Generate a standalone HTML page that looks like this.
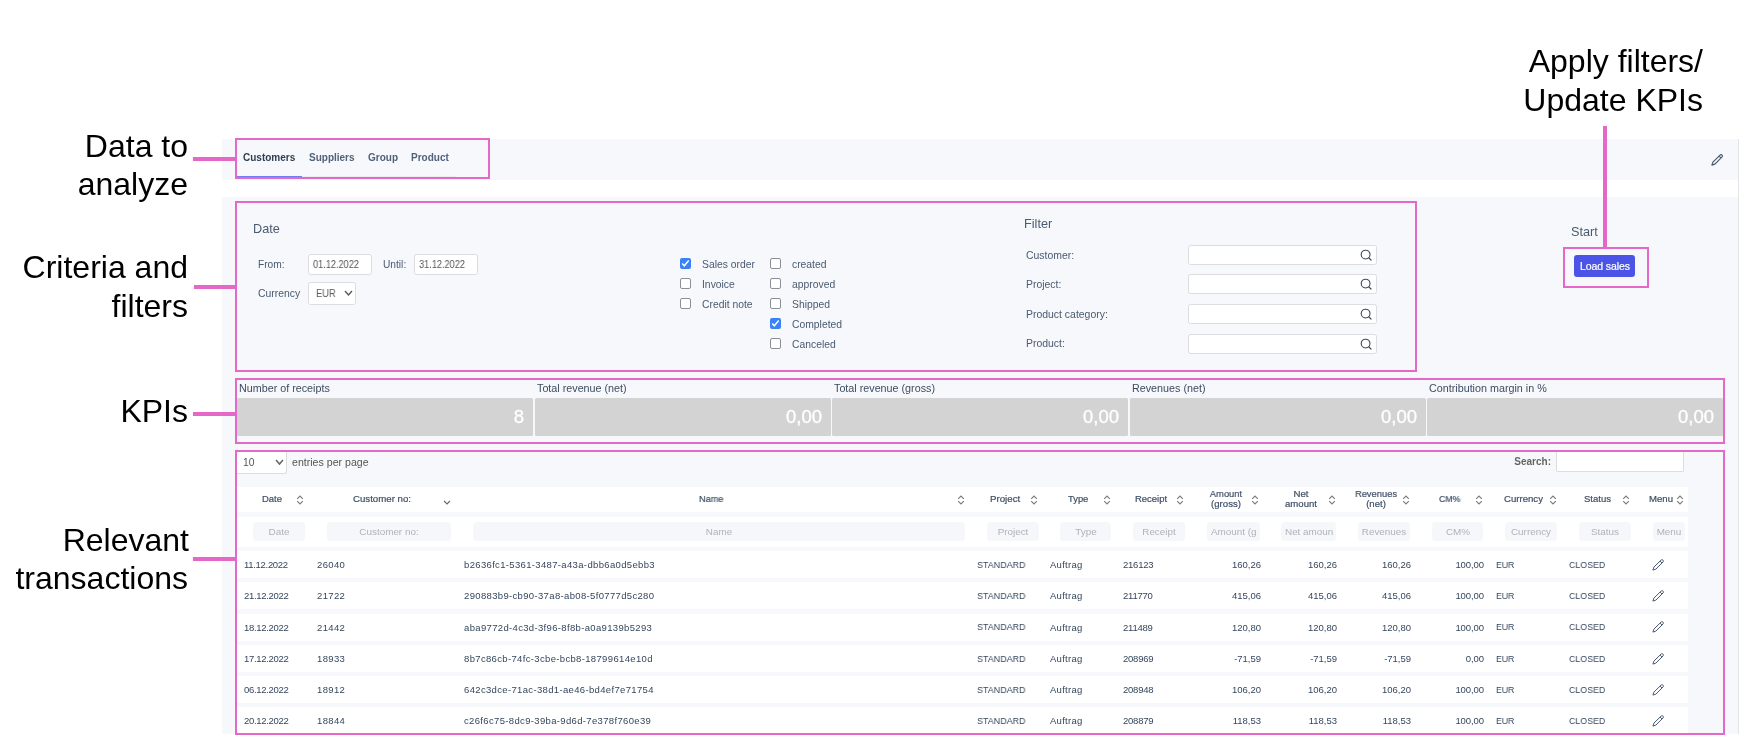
<!DOCTYPE html>
<html><head><meta charset="utf-8"><style>
html,body{margin:0;padding:0;background:#fff;}
body{width:1750px;height:752px;position:relative;overflow:hidden;font-family:"Liberation Sans",sans-serif;}
.t{position:absolute;white-space:nowrap;will-change:transform;}
.r{position:absolute;}
svg.r{overflow:visible;}
</style></head><body>
<div class="r" style="left:222px;top:139px;width:1516px;height:41px;background:#f7f8fb;"></div>
<div class="r" style="left:222px;top:197px;width:1516px;height:537px;background:#f7f8fb;"></div>
<div class="r" style="left:1738px;top:139px;width:1px;height:595px;background:#e3e4e6;"></div>
<div class="t" style="left:-412.00px;width:600px;text-align:right;top:129.91px;font-size:32px;line-height:32px;color:#000;font-weight:400;">Data to</div>
<div class="t" style="left:-412.00px;width:600px;text-align:right;top:167.91px;font-size:32px;line-height:32px;color:#000;font-weight:400;">analyze</div>
<div class="t" style="left:-412.50px;width:600px;text-align:right;top:250.71px;font-size:32px;line-height:32px;color:#000;font-weight:400;">Criteria and</div>
<div class="t" style="left:-412.20px;width:600px;text-align:right;top:289.61px;font-size:32px;line-height:32px;color:#000;font-weight:400;">filters</div>
<div class="t" style="left:-412.00px;width:600px;text-align:right;top:394.91px;font-size:32px;line-height:32px;color:#000;font-weight:400;">KPIs</div>
<div class="t" style="left:-411.40px;width:600px;text-align:right;top:523.91px;font-size:32px;line-height:32px;color:#000;font-weight:400;">Relevant</div>
<div class="t" style="left:-412.20px;width:600px;text-align:right;top:561.91px;font-size:32px;line-height:32px;color:#000;font-weight:400;">transactions</div>
<div class="t" style="left:1103.30px;width:600px;text-align:right;top:45.11px;font-size:32px;line-height:32px;color:#000;font-weight:400;">Apply filters/</div>
<div class="t" style="left:1102.60px;width:600px;text-align:right;top:83.81px;font-size:32px;line-height:32px;color:#000;font-weight:400;">Update KPIs</div>
<div class="r" style="left:193px;top:157px;width:43px;height:4px;background:#e567c8;"></div>
<div class="r" style="left:194px;top:285px;width:42px;height:4px;background:#e567c8;"></div>
<div class="r" style="left:193px;top:412px;width:43px;height:4px;background:#e567c8;"></div>
<div class="r" style="left:193px;top:557px;width:43px;height:4px;background:#e567c8;"></div>
<div class="r" style="left:1603px;top:126px;width:4px;height:122px;background:#e567c8;"></div>
<div class="t" style="left:243.00px;top:152.94px;font-size:10px;line-height:10px;color:#2f3e52;font-weight:700;">Customers</div>
<div class="t" style="left:309.20px;top:152.94px;font-size:10px;line-height:10px;color:#51627a;font-weight:700;">Suppliers</div>
<div class="t" style="left:368.20px;top:152.94px;font-size:10px;line-height:10px;color:#51627a;font-weight:700;">Group</div>
<div class="t" style="left:410.60px;top:152.94px;font-size:10px;line-height:10px;color:#51627a;font-weight:700;">Product</div>
<div class="r" style="left:302px;top:176px;width:154px;height:1px;background:#eceef3;"></div>
<div class="r" style="left:237px;top:176px;width:65px;height:1.5px;background:#6d7ef0;"></div>
<svg class="r" style="left:1711px;top:154.2px" width="12" height="12" viewBox="0 0 12 12"><path d="M9.3 0.9 Q10.3 0.4 11.1 1.2 Q11.7 2 11.1 2.9 L3.9 10.1 L0.9 11.1 L1.9 8.1 Z M8.1 2.1 L10 4" fill="none" stroke="#4a5a70" stroke-width="1.2" stroke-linejoin="round"/></svg>
<div class="t" style="left:252.50px;top:222.75px;font-size:12.7px;line-height:12.7px;color:#4a5a70;font-weight:400;">Date</div>
<div class="t" style="left:258.00px;top:259.67px;font-size:10.2px;line-height:10.2px;color:#4a5a70;font-weight:400;">From:</div>
<div class="r" style="left:308px;top:254px;width:63.5px;height:20.5px;background:#fff;border:1px solid #dcdde0;border-radius:2.5px;box-sizing:border-box;"></div>
<div class="t" style="left:312.80px;top:259.74px;font-size:10px;line-height:10px;color:#555;font-weight:400;transform:scaleX(0.9180);transform-origin:0.00px 0;">01.12.2022</div>
<div class="t" style="left:383.00px;top:259.67px;font-size:10.2px;line-height:10.2px;color:#4a5a70;font-weight:400;">Until:</div>
<div class="r" style="left:414px;top:254px;width:63.5px;height:20.5px;background:#fff;border:1px solid #dcdde0;border-radius:2.5px;box-sizing:border-box;"></div>
<div class="t" style="left:419.00px;top:259.74px;font-size:10px;line-height:10px;color:#555;font-weight:400;transform:scaleX(0.9180);transform-origin:0.00px 0;">31.12.2022</div>
<div class="t" style="left:258.00px;top:289.00px;font-size:10.4px;line-height:10.4px;color:#4a5a70;font-weight:400;">Currency</div>
<div class="r" style="left:308px;top:281.5px;width:48px;height:23.3px;background:#fff;border:1px solid #dcdde0;border-radius:2.5px;box-sizing:border-box;"></div>
<div class="t" style="left:316.30px;top:289.08px;font-size:10.3px;line-height:10.3px;color:#5a5a5a;font-weight:400;transform:scaleX(0.9111);transform-origin:0.00px 0;">EUR</div>
<svg class="r" style="left:344.2px;top:290.0px" width="9" height="6" viewBox="-1 -1 9 6"><path d="M0 0 L3.5 4 L7 0" fill="none" stroke="#555" stroke-width="1.3"/></svg>
<svg class="r" style="left:680px;top:258px" width="11" height="11" viewBox="0 0 11 11"><rect x="0" y="0" width="11" height="11" rx="2" fill="#3b82f6"/><path d="M2.2 5.6 L4.3 7.8 L8.7 2.6" fill="none" stroke="#fff" stroke-width="1.5"/></svg>
<div class="t" style="left:702.00px;top:259.84px;font-size:10.35px;line-height:10.35px;color:#4a5a70;font-weight:400;">Sales order</div>
<div class="r" style="left:680px;top:278px;width:11px;height:11px;background:#fff;border:1px solid #8a8f98;border-radius:2px;box-sizing:border-box;"></div>
<div class="t" style="left:702.00px;top:279.84px;font-size:10.35px;line-height:10.35px;color:#4a5a70;font-weight:400;">Invoice</div>
<div class="r" style="left:680px;top:298px;width:11px;height:11px;background:#fff;border:1px solid #8a8f98;border-radius:2px;box-sizing:border-box;"></div>
<div class="t" style="left:702.00px;top:299.84px;font-size:10.35px;line-height:10.35px;color:#4a5a70;font-weight:400;">Credit note</div>
<div class="r" style="left:770px;top:258px;width:11px;height:11px;background:#fff;border:1px solid #8a8f98;border-radius:2px;box-sizing:border-box;"></div>
<div class="t" style="left:791.60px;top:259.84px;font-size:10.35px;line-height:10.35px;color:#4a5a70;font-weight:400;">created</div>
<div class="r" style="left:770px;top:278px;width:11px;height:11px;background:#fff;border:1px solid #8a8f98;border-radius:2px;box-sizing:border-box;"></div>
<div class="t" style="left:791.60px;top:279.84px;font-size:10.35px;line-height:10.35px;color:#4a5a70;font-weight:400;">approved</div>
<div class="r" style="left:770px;top:298px;width:11px;height:11px;background:#fff;border:1px solid #8a8f98;border-radius:2px;box-sizing:border-box;"></div>
<div class="t" style="left:791.60px;top:299.84px;font-size:10.35px;line-height:10.35px;color:#4a5a70;font-weight:400;">Shipped</div>
<svg class="r" style="left:770px;top:318px" width="11" height="11" viewBox="0 0 11 11"><rect x="0" y="0" width="11" height="11" rx="2" fill="#3b82f6"/><path d="M2.2 5.6 L4.3 7.8 L8.7 2.6" fill="none" stroke="#fff" stroke-width="1.5"/></svg>
<div class="t" style="left:791.60px;top:319.84px;font-size:10.35px;line-height:10.35px;color:#4a5a70;font-weight:400;">Completed</div>
<div class="r" style="left:770px;top:338px;width:11px;height:11px;background:#fff;border:1px solid #8a8f98;border-radius:2px;box-sizing:border-box;"></div>
<div class="t" style="left:791.60px;top:339.84px;font-size:10.35px;line-height:10.35px;color:#4a5a70;font-weight:400;">Canceled</div>
<div class="t" style="left:1024.00px;top:217.95px;font-size:12.7px;line-height:12.7px;color:#4a5a70;font-weight:400;">Filter</div>
<div class="t" style="left:1026.00px;top:250.65px;font-size:10.45px;line-height:10.45px;color:#4a5a70;font-weight:400;">Customer:</div>
<div class="r" style="left:1188px;top:245px;width:188.5px;height:20.3px;background:#fff;border:1px solid #dcdde0;border-radius:2.5px;box-sizing:border-box;"></div>
<svg class="r" style="left:1359.5px;top:249px" width="12" height="12" viewBox="0 0 12 12"><circle cx="5.6" cy="5.6" r="4.4" fill="none" stroke="#3d4857" stroke-width="1.1"/><path d="M8.8 8.8 L11 11" stroke="#3d4857" stroke-width="1.2" stroke-linecap="round"/></svg>
<div class="t" style="left:1026.00px;top:280.45px;font-size:10.45px;line-height:10.45px;color:#4a5a70;font-weight:400;">Project:</div>
<div class="r" style="left:1188px;top:274.2px;width:188.5px;height:20.3px;background:#fff;border:1px solid #dcdde0;border-radius:2.5px;box-sizing:border-box;"></div>
<svg class="r" style="left:1359.5px;top:278.2px" width="12" height="12" viewBox="0 0 12 12"><circle cx="5.6" cy="5.6" r="4.4" fill="none" stroke="#3d4857" stroke-width="1.1"/><path d="M8.8 8.8 L11 11" stroke="#3d4857" stroke-width="1.2" stroke-linecap="round"/></svg>
<div class="t" style="left:1026.00px;top:309.65px;font-size:10.45px;line-height:10.45px;color:#4a5a70;font-weight:400;">Product category:</div>
<div class="r" style="left:1188px;top:304px;width:188.5px;height:20.3px;background:#fff;border:1px solid #dcdde0;border-radius:2.5px;box-sizing:border-box;"></div>
<svg class="r" style="left:1359.5px;top:308px" width="12" height="12" viewBox="0 0 12 12"><circle cx="5.6" cy="5.6" r="4.4" fill="none" stroke="#3d4857" stroke-width="1.1"/><path d="M8.8 8.8 L11 11" stroke="#3d4857" stroke-width="1.2" stroke-linecap="round"/></svg>
<div class="t" style="left:1026.00px;top:339.45px;font-size:10.45px;line-height:10.45px;color:#4a5a70;font-weight:400;">Product:</div>
<div class="r" style="left:1188px;top:333.8px;width:188.5px;height:20.3px;background:#fff;border:1px solid #dcdde0;border-radius:2.5px;box-sizing:border-box;"></div>
<svg class="r" style="left:1359.5px;top:337.8px" width="12" height="12" viewBox="0 0 12 12"><circle cx="5.6" cy="5.6" r="4.4" fill="none" stroke="#3d4857" stroke-width="1.1"/><path d="M8.8 8.8 L11 11" stroke="#3d4857" stroke-width="1.2" stroke-linecap="round"/></svg>
<div class="t" style="left:1571.00px;top:225.55px;font-size:12.7px;line-height:12.7px;color:#4a5a70;font-weight:400;">Start</div>
<div class="r" style="left:1574px;top:255px;width:61px;height:22px;background:#4b54e7;border-radius:3px;"></div>
<div class="t" style="left:1304.75px;width:600px;text-align:center;top:261.11px;font-size:10.5px;line-height:10.5px;color:#fff;font-weight:400;letter-spacing:-0.091px;-webkit-text-stroke:0.2px currentColor;">Load sales</div>
<div class="t" style="left:239.40px;top:382.90px;font-size:10.75px;line-height:10.75px;color:#3d4c60;font-weight:400;">Number of receipts</div>
<div class="r" style="left:237.0px;top:398.3px;width:296px;height:37.3px;background:#d3d3d3;border-radius:1.5px;"></div>
<div class="t" style="left:-76.00px;width:600px;text-align:right;top:407.64px;font-size:18.5px;line-height:18.5px;color:#fff;font-weight:400;-webkit-text-stroke:0.3px #fff;">8</div>
<div class="t" style="left:536.90px;top:382.90px;font-size:10.75px;line-height:10.75px;color:#3d4c60;font-weight:400;">Total revenue (net)</div>
<div class="r" style="left:534.5px;top:398.3px;width:296px;height:37.3px;background:#d3d3d3;border-radius:1.5px;"></div>
<div class="t" style="left:221.50px;width:600px;text-align:right;top:407.64px;font-size:18.5px;line-height:18.5px;color:#fff;font-weight:400;-webkit-text-stroke:0.3px #fff;">0,00</div>
<div class="t" style="left:834.40px;top:382.90px;font-size:10.75px;line-height:10.75px;color:#3d4c60;font-weight:400;">Total revenue (gross)</div>
<div class="r" style="left:832.0px;top:398.3px;width:296px;height:37.3px;background:#d3d3d3;border-radius:1.5px;"></div>
<div class="t" style="left:519.00px;width:600px;text-align:right;top:407.64px;font-size:18.5px;line-height:18.5px;color:#fff;font-weight:400;-webkit-text-stroke:0.3px #fff;">0,00</div>
<div class="t" style="left:1131.90px;top:382.90px;font-size:10.75px;line-height:10.75px;color:#3d4c60;font-weight:400;">Revenues (net)</div>
<div class="r" style="left:1129.5px;top:398.3px;width:296px;height:37.3px;background:#d3d3d3;border-radius:1.5px;"></div>
<div class="t" style="left:816.50px;width:600px;text-align:right;top:407.64px;font-size:18.5px;line-height:18.5px;color:#fff;font-weight:400;-webkit-text-stroke:0.3px #fff;">0,00</div>
<div class="t" style="left:1429.40px;top:382.90px;font-size:10.75px;line-height:10.75px;color:#3d4c60;font-weight:400;">Contribution margin in %</div>
<div class="r" style="left:1427.0px;top:398.3px;width:296px;height:37.3px;background:#d3d3d3;border-radius:1.5px;"></div>
<div class="t" style="left:1114.00px;width:600px;text-align:right;top:407.64px;font-size:18.5px;line-height:18.5px;color:#fff;font-weight:400;-webkit-text-stroke:0.3px #fff;">0,00</div>
<div class="r" style="left:235px;top:138px;width:255px;height:41px;border:2px solid #e567c8;box-sizing:border-box;"></div>
<div class="r" style="left:235px;top:201px;width:1182px;height:171px;border:2px solid #e567c8;box-sizing:border-box;"></div>
<div class="r" style="left:1563px;top:247px;width:86px;height:41px;border:2px solid #e567c8;box-sizing:border-box;"></div>
<div class="r" style="left:235px;top:378px;width:1490px;height:66px;border:2px solid #e567c8;box-sizing:border-box;"></div>
<div class="r" style="left:237px;top:452px;width:50px;height:21.5px;background:#fff;border:1px solid #dcdde0;border-top:none;border-left:none;border-radius:0 0 3px 0;box-sizing:border-box;"></div>
<div class="t" style="left:243.20px;top:457.58px;font-size:10.3px;line-height:10.3px;color:#555;font-weight:400;">10</div>
<svg class="r" style="left:275.0px;top:459.3px" width="9" height="6" viewBox="-1 -1 9 6"><path d="M0 0 L3.5 4 L7 0" fill="none" stroke="#666" stroke-width="1.5"/></svg>
<div class="t" style="left:291.60px;top:457.33px;font-size:10.6px;line-height:10.6px;color:#555;font-weight:400;">entries per page</div>
<div class="t" style="left:950.60px;width:600px;text-align:right;top:456.54px;font-size:10px;line-height:10px;color:#646464;font-weight:700;">Search:</div>
<div class="r" style="left:1556px;top:452px;width:128px;height:20px;background:#fff;border:1px solid #dcdde0;border-top:none;border-radius:0 0 2px 2px;box-sizing:border-box;"></div>
<div class="r" style="left:237px;top:486.6px;width:1451px;height:25px;background:#fff;"></div>
<div class="r" style="left:237px;top:516.5px;width:1451px;height:30.2px;background:#fff;"></div>
<div class="r" style="left:237px;top:551px;width:1451px;height:27.2px;background:#fff;"></div>
<div class="r" style="left:237px;top:582.2px;width:1451px;height:27.2px;background:#fff;"></div>
<div class="r" style="left:237px;top:613.5px;width:1451px;height:27.2px;background:#fff;"></div>
<div class="r" style="left:237px;top:644.8px;width:1451px;height:27.2px;background:#fff;"></div>
<div class="r" style="left:237px;top:676.1px;width:1451px;height:27.2px;background:#fff;"></div>
<div class="r" style="left:237px;top:707.4px;width:1451px;height:27.2px;background:#fff;"></div>
<div class="t" style="left:261.80px;top:493.94px;font-size:9.4px;line-height:9.4px;color:#3e4f66;font-weight:400;transform:scaleX(1.0084);transform-origin:0.00px 0;-webkit-text-stroke:0.2px currentColor;">Date</div>
<svg class="r" style="left:296px;top:494.8px" width="8" height="10" viewBox="0 0 8 10"><path d="M1.2 3.8 L4 1 L6.8 3.8 M1.2 6.2 L4 9 L6.8 6.2" fill="none" stroke="#7a7a7a" stroke-width="1.1"/></svg>
<div class="t" style="left:352.70px;top:493.94px;font-size:9.4px;line-height:9.4px;color:#3e4f66;font-weight:400;transform:scaleX(1.0301);transform-origin:0.00px 0;-webkit-text-stroke:0.2px currentColor;">Customer no:</div>
<svg class="r" style="left:442.5px;top:499.5px" width="8" height="5" viewBox="-1 -1 8 5"><path d="M0 0 L3.0 3 L6 0" fill="none" stroke="#666" stroke-width="1.1"/></svg>
<div class="t" style="left:699.30px;top:493.94px;font-size:9.4px;line-height:9.4px;color:#3e4f66;font-weight:400;transform:scaleX(0.9762);transform-origin:0.00px 0;-webkit-text-stroke:0.2px currentColor;">Name</div>
<svg class="r" style="left:957px;top:494.8px" width="8" height="10" viewBox="0 0 8 10"><path d="M1.2 3.8 L4 1 L6.8 3.8 M1.2 6.2 L4 9 L6.8 6.2" fill="none" stroke="#7a7a7a" stroke-width="1.1"/></svg>
<div class="t" style="left:989.70px;top:493.94px;font-size:9.4px;line-height:9.4px;color:#3e4f66;font-weight:400;transform:scaleX(1.0365);transform-origin:0.00px 0;-webkit-text-stroke:0.2px currentColor;">Project</div>
<svg class="r" style="left:1030px;top:494.8px" width="8" height="10" viewBox="0 0 8 10"><path d="M1.2 3.8 L4 1 L6.8 3.8 M1.2 6.2 L4 9 L6.8 6.2" fill="none" stroke="#7a7a7a" stroke-width="1.1"/></svg>
<div class="t" style="left:1068.00px;top:493.94px;font-size:9.4px;line-height:9.4px;color:#3e4f66;font-weight:400;transform:scaleX(1.0001);transform-origin:0.00px 0;-webkit-text-stroke:0.2px currentColor;">Type</div>
<svg class="r" style="left:1103px;top:494.8px" width="8" height="10" viewBox="0 0 8 10"><path d="M1.2 3.8 L4 1 L6.8 3.8 M1.2 6.2 L4 9 L6.8 6.2" fill="none" stroke="#7a7a7a" stroke-width="1.1"/></svg>
<div class="t" style="left:1135.40px;top:493.94px;font-size:9.4px;line-height:9.4px;color:#3e4f66;font-weight:400;transform:scaleX(1.0105);transform-origin:0.00px 0;-webkit-text-stroke:0.2px currentColor;">Receipt</div>
<svg class="r" style="left:1176px;top:494.8px" width="8" height="10" viewBox="0 0 8 10"><path d="M1.2 3.8 L4 1 L6.8 3.8 M1.2 6.2 L4 9 L6.8 6.2" fill="none" stroke="#7a7a7a" stroke-width="1.1"/></svg>
<div class="t" style="left:925.60px;width:600px;text-align:center;top:488.94px;font-size:9.4px;line-height:9.4px;color:#3e4f66;font-weight:400;transform:scaleX(0.9929);transform-origin:300.00px 0;-webkit-text-stroke:0.2px currentColor;">Amount</div>
<div class="t" style="left:925.60px;width:600px;text-align:center;top:498.94px;font-size:9.4px;line-height:9.4px;color:#3e4f66;font-weight:400;transform:scaleX(1.0262);transform-origin:300.00px 0;-webkit-text-stroke:0.2px currentColor;">(gross)</div>
<svg class="r" style="left:1251px;top:494.8px" width="8" height="10" viewBox="0 0 8 10"><path d="M1.2 3.8 L4 1 L6.8 3.8 M1.2 6.2 L4 9 L6.8 6.2" fill="none" stroke="#7a7a7a" stroke-width="1.1"/></svg>
<div class="t" style="left:1001.20px;width:600px;text-align:center;top:488.94px;font-size:9.4px;line-height:9.4px;color:#3e4f66;font-weight:400;transform:scaleX(1.0297);transform-origin:300.00px 0;-webkit-text-stroke:0.2px currentColor;">Net</div>
<div class="t" style="left:1001.20px;width:600px;text-align:center;top:498.94px;font-size:9.4px;line-height:9.4px;color:#3e4f66;font-weight:400;transform:scaleX(1.0192);transform-origin:300.00px 0;-webkit-text-stroke:0.2px currentColor;">amount</div>
<svg class="r" style="left:1328px;top:494.8px" width="8" height="10" viewBox="0 0 8 10"><path d="M1.2 3.8 L4 1 L6.8 3.8 M1.2 6.2 L4 9 L6.8 6.2" fill="none" stroke="#7a7a7a" stroke-width="1.1"/></svg>
<div class="t" style="left:1076.40px;width:600px;text-align:center;top:488.94px;font-size:9.4px;line-height:9.4px;color:#3e4f66;font-weight:400;transform:scaleX(0.9929);transform-origin:300.00px 0;-webkit-text-stroke:0.2px currentColor;">Revenues</div>
<div class="t" style="left:1076.40px;width:600px;text-align:center;top:498.94px;font-size:9.4px;line-height:9.4px;color:#3e4f66;font-weight:400;transform:scaleX(1.0174);transform-origin:300.00px 0;-webkit-text-stroke:0.2px currentColor;">(net)</div>
<svg class="r" style="left:1402px;top:494.8px" width="8" height="10" viewBox="0 0 8 10"><path d="M1.2 3.8 L4 1 L6.8 3.8 M1.2 6.2 L4 9 L6.8 6.2" fill="none" stroke="#7a7a7a" stroke-width="1.1"/></svg>
<div class="t" style="left:1439.40px;top:493.94px;font-size:9.4px;line-height:9.4px;color:#3e4f66;font-weight:400;transform:scaleX(0.9330);transform-origin:0.00px 0;-webkit-text-stroke:0.2px currentColor;">CM%</div>
<svg class="r" style="left:1474.9px;top:494.8px" width="8" height="10" viewBox="0 0 8 10"><path d="M1.2 3.8 L4 1 L6.8 3.8 M1.2 6.2 L4 9 L6.8 6.2" fill="none" stroke="#7a7a7a" stroke-width="1.1"/></svg>
<div class="t" style="left:1504.00px;top:493.94px;font-size:9.4px;line-height:9.4px;color:#3e4f66;font-weight:400;transform:scaleX(1.0245);transform-origin:0.00px 0;-webkit-text-stroke:0.2px currentColor;">Currency</div>
<svg class="r" style="left:1549.4px;top:494.8px" width="8" height="10" viewBox="0 0 8 10"><path d="M1.2 3.8 L4 1 L6.8 3.8 M1.2 6.2 L4 9 L6.8 6.2" fill="none" stroke="#7a7a7a" stroke-width="1.1"/></svg>
<div class="t" style="left:1583.50px;top:493.94px;font-size:9.4px;line-height:9.4px;color:#3e4f66;font-weight:400;transform:scaleX(1.0150);transform-origin:0.00px 0;-webkit-text-stroke:0.2px currentColor;">Status</div>
<svg class="r" style="left:1622px;top:494.8px" width="8" height="10" viewBox="0 0 8 10"><path d="M1.2 3.8 L4 1 L6.8 3.8 M1.2 6.2 L4 9 L6.8 6.2" fill="none" stroke="#7a7a7a" stroke-width="1.1"/></svg>
<div class="t" style="left:1649.00px;top:493.94px;font-size:9.4px;line-height:9.4px;color:#3e4f66;font-weight:400;transform:scaleX(1.0213);transform-origin:0.00px 0;-webkit-text-stroke:0.2px currentColor;">Menu</div>
<svg class="r" style="left:1676.4px;top:494.8px" width="8" height="10" viewBox="0 0 8 10"><path d="M1.2 3.8 L4 1 L6.8 3.8 M1.2 6.2 L4 9 L6.8 6.2" fill="none" stroke="#7a7a7a" stroke-width="1.1"/></svg>
<div class="r" style="left:253.3px;top:522.3px;width:51.7px;height:18.8px;background:#f6f7fa;border-radius:3px;"></div>
<div class="t" style="left:-20.85px;width:600px;text-align:center;top:526.82px;font-size:9.9px;line-height:9.9px;color:#aeb2b9;font-weight:400;">Date</div>
<div class="r" style="left:326.5px;top:522.3px;width:124.7px;height:18.8px;background:#f6f7fa;border-radius:3px;"></div>
<div class="t" style="left:88.85px;width:600px;text-align:center;top:526.82px;font-size:9.9px;line-height:9.9px;color:#aeb2b9;font-weight:400;">Customer no:</div>
<div class="r" style="left:473px;top:522.3px;width:492px;height:18.8px;background:#f6f7fa;border-radius:3px;"></div>
<div class="t" style="left:419.00px;width:600px;text-align:center;top:526.82px;font-size:9.9px;line-height:9.9px;color:#aeb2b9;font-weight:400;">Name</div>
<div class="r" style="left:987px;top:522.3px;width:51.6px;height:18.8px;background:#f6f7fa;border-radius:3px;"></div>
<div class="t" style="left:712.80px;width:600px;text-align:center;top:526.82px;font-size:9.9px;line-height:9.9px;color:#aeb2b9;font-weight:400;">Project</div>
<div class="r" style="left:1060px;top:522.3px;width:51.4px;height:18.8px;background:#f6f7fa;border-radius:3px;"></div>
<div class="t" style="left:785.70px;width:600px;text-align:center;top:526.82px;font-size:9.9px;line-height:9.9px;color:#aeb2b9;font-weight:400;">Type</div>
<div class="r" style="left:1133.4px;top:522.3px;width:51.4px;height:18.8px;background:#f6f7fa;border-radius:3px;"></div>
<div class="t" style="left:859.10px;width:600px;text-align:center;top:526.82px;font-size:9.9px;line-height:9.9px;color:#aeb2b9;font-weight:400;">Receipt</div>
<div class="r" style="left:1206.6px;top:522.3px;width:53.2px;height:18.8px;background:#f6f7fa;border-radius:3px;"></div>
<div class="r" style="left:1206.6px;top:522.3px;width:53.2px;height:18.8px;overflow:hidden;"><div class="t" style="left:4px;top:4.52px;font-size:9.9px;line-height:9.9px;color:#aeb2b9;white-space:nowrap">Amount (g</div></div>
<div class="r" style="left:1281.4px;top:522.3px;width:54.8px;height:18.8px;background:#f6f7fa;border-radius:3px;"></div>
<div class="r" style="left:1281.4px;top:522.3px;width:54.8px;height:18.8px;overflow:hidden;"><div class="t" style="left:4px;top:4.52px;font-size:9.9px;line-height:9.9px;color:#aeb2b9;white-space:nowrap">Net amoun</div></div>
<div class="r" style="left:1358px;top:522.3px;width:52px;height:18.8px;background:#f6f7fa;border-radius:3px;"></div>
<div class="t" style="left:1084.00px;width:600px;text-align:center;top:526.82px;font-size:9.9px;line-height:9.9px;color:#aeb2b9;font-weight:400;">Revenues</div>
<div class="r" style="left:1432.2px;top:522.3px;width:51.0px;height:18.8px;background:#f6f7fa;border-radius:3px;"></div>
<div class="t" style="left:1157.70px;width:600px;text-align:center;top:526.82px;font-size:9.9px;line-height:9.9px;color:#aeb2b9;font-weight:400;">CM%</div>
<div class="r" style="left:1505.3px;top:522.3px;width:52.1px;height:18.8px;background:#f6f7fa;border-radius:3px;"></div>
<div class="t" style="left:1231.35px;width:600px;text-align:center;top:526.82px;font-size:9.9px;line-height:9.9px;color:#aeb2b9;font-weight:400;">Currency</div>
<div class="r" style="left:1579.4px;top:522.3px;width:51.2px;height:18.8px;background:#f6f7fa;border-radius:3px;"></div>
<div class="t" style="left:1305.00px;width:600px;text-align:center;top:526.82px;font-size:9.9px;line-height:9.9px;color:#aeb2b9;font-weight:400;">Status</div>
<div class="r" style="left:1652.6px;top:522.3px;width:32.0px;height:18.8px;background:#f6f7fa;border-radius:3px;"></div>
<div class="t" style="left:1368.60px;width:600px;text-align:center;top:526.82px;font-size:9.9px;line-height:9.9px;color:#aeb2b9;font-weight:400;">Menu</div>
<div class="t" style="left:243.60px;top:559.96px;font-size:9.5px;line-height:9.5px;color:#35465c;font-weight:400;letter-spacing:-0.304px;">11.12.2022</div>
<div class="t" style="left:316.80px;top:559.96px;font-size:9.5px;line-height:9.5px;color:#35465c;font-weight:400;letter-spacing:0.372px;">26040</div>
<div class="t" style="left:463.80px;top:559.96px;font-size:9.5px;line-height:9.5px;color:#35465c;font-weight:400;letter-spacing:0.343px;">b2636fc1-5361-3487-a43a-dbb6a0d5ebb3</div>
<div class="t" style="left:976.70px;top:559.70px;font-size:9.8px;line-height:9.8px;color:#35465c;font-weight:400;transform:scaleX(0.9133);transform-origin:0.00px 0;">STANDARD</div>
<div class="t" style="left:1050.00px;top:559.96px;font-size:9.5px;line-height:9.5px;color:#35465c;font-weight:400;letter-spacing:0.268px;">Auftrag</div>
<div class="t" style="left:1123.30px;top:559.96px;font-size:9.5px;line-height:9.5px;color:#35465c;font-weight:400;letter-spacing:-0.226px;">216123</div>
<div class="t" style="left:660.79px;width:600px;text-align:right;top:559.96px;font-size:9.5px;line-height:9.5px;color:#35465c;font-weight:400;letter-spacing:-0.014px;">160,26</div>
<div class="t" style="left:736.79px;width:600px;text-align:right;top:559.96px;font-size:9.5px;line-height:9.5px;color:#35465c;font-weight:400;letter-spacing:-0.014px;">160,26</div>
<div class="t" style="left:811.19px;width:600px;text-align:right;top:559.96px;font-size:9.5px;line-height:9.5px;color:#35465c;font-weight:400;letter-spacing:-0.014px;">160,26</div>
<div class="t" style="left:884.43px;width:600px;text-align:right;top:559.96px;font-size:9.5px;line-height:9.5px;color:#35465c;font-weight:400;letter-spacing:-0.074px;">100,00</div>
<div class="t" style="left:1495.60px;top:559.70px;font-size:9.8px;line-height:9.8px;color:#35465c;font-weight:400;transform:scaleX(0.8898);transform-origin:0.00px 0;">EUR</div>
<div class="t" style="left:1568.60px;top:559.70px;font-size:9.8px;line-height:9.8px;color:#35465c;font-weight:400;transform:scaleX(0.9012);transform-origin:0.00px 0;">CLOSED</div>
<svg class="r" style="left:1651.5px;top:558.8px" width="12" height="12" viewBox="0 0 12 12"><path d="M9.3 0.9 Q10.3 0.4 11.1 1.2 Q11.7 2 11.1 2.9 L3.9 10.1 L0.9 11.1 L1.9 8.1 Z M8.1 2.1 L10 4" fill="none" stroke="#4a5a70" stroke-width="1.0" stroke-linejoin="round"/></svg>
<div class="t" style="left:243.60px;top:591.23px;font-size:9.5px;line-height:9.5px;color:#35465c;font-weight:400;letter-spacing:-0.304px;">21.12.2022</div>
<div class="t" style="left:316.80px;top:591.23px;font-size:9.5px;line-height:9.5px;color:#35465c;font-weight:400;letter-spacing:0.372px;">21722</div>
<div class="t" style="left:463.80px;top:591.23px;font-size:9.5px;line-height:9.5px;color:#35465c;font-weight:400;letter-spacing:0.343px;">290883b9-cb90-37a8-ab08-5f0777d5c280</div>
<div class="t" style="left:976.70px;top:590.97px;font-size:9.8px;line-height:9.8px;color:#35465c;font-weight:400;transform:scaleX(0.9133);transform-origin:0.00px 0;">STANDARD</div>
<div class="t" style="left:1050.00px;top:591.23px;font-size:9.5px;line-height:9.5px;color:#35465c;font-weight:400;letter-spacing:0.268px;">Auftrag</div>
<div class="t" style="left:1123.30px;top:591.23px;font-size:9.5px;line-height:9.5px;color:#35465c;font-weight:400;letter-spacing:-0.226px;">211770</div>
<div class="t" style="left:660.79px;width:600px;text-align:right;top:591.23px;font-size:9.5px;line-height:9.5px;color:#35465c;font-weight:400;letter-spacing:-0.014px;">415,06</div>
<div class="t" style="left:736.79px;width:600px;text-align:right;top:591.23px;font-size:9.5px;line-height:9.5px;color:#35465c;font-weight:400;letter-spacing:-0.014px;">415,06</div>
<div class="t" style="left:811.19px;width:600px;text-align:right;top:591.23px;font-size:9.5px;line-height:9.5px;color:#35465c;font-weight:400;letter-spacing:-0.014px;">415,06</div>
<div class="t" style="left:884.43px;width:600px;text-align:right;top:591.23px;font-size:9.5px;line-height:9.5px;color:#35465c;font-weight:400;letter-spacing:-0.074px;">100,00</div>
<div class="t" style="left:1495.60px;top:590.97px;font-size:9.8px;line-height:9.8px;color:#35465c;font-weight:400;transform:scaleX(0.8898);transform-origin:0.00px 0;">EUR</div>
<div class="t" style="left:1568.60px;top:590.97px;font-size:9.8px;line-height:9.8px;color:#35465c;font-weight:400;transform:scaleX(0.9012);transform-origin:0.00px 0;">CLOSED</div>
<svg class="r" style="left:1651.5px;top:590.0699999999999px" width="12" height="12" viewBox="0 0 12 12"><path d="M9.3 0.9 Q10.3 0.4 11.1 1.2 Q11.7 2 11.1 2.9 L3.9 10.1 L0.9 11.1 L1.9 8.1 Z M8.1 2.1 L10 4" fill="none" stroke="#4a5a70" stroke-width="1.0" stroke-linejoin="round"/></svg>
<div class="t" style="left:243.60px;top:622.50px;font-size:9.5px;line-height:9.5px;color:#35465c;font-weight:400;letter-spacing:-0.304px;">18.12.2022</div>
<div class="t" style="left:316.80px;top:622.50px;font-size:9.5px;line-height:9.5px;color:#35465c;font-weight:400;letter-spacing:0.372px;">21442</div>
<div class="t" style="left:463.80px;top:622.50px;font-size:9.5px;line-height:9.5px;color:#35465c;font-weight:400;letter-spacing:0.343px;">aba9772d-4c3d-3f96-8f8b-a0a9139b5293</div>
<div class="t" style="left:976.70px;top:622.24px;font-size:9.8px;line-height:9.8px;color:#35465c;font-weight:400;transform:scaleX(0.9133);transform-origin:0.00px 0;">STANDARD</div>
<div class="t" style="left:1050.00px;top:622.50px;font-size:9.5px;line-height:9.5px;color:#35465c;font-weight:400;letter-spacing:0.268px;">Auftrag</div>
<div class="t" style="left:1123.30px;top:622.50px;font-size:9.5px;line-height:9.5px;color:#35465c;font-weight:400;letter-spacing:-0.226px;">211489</div>
<div class="t" style="left:660.79px;width:600px;text-align:right;top:622.50px;font-size:9.5px;line-height:9.5px;color:#35465c;font-weight:400;letter-spacing:-0.014px;">120,80</div>
<div class="t" style="left:736.79px;width:600px;text-align:right;top:622.50px;font-size:9.5px;line-height:9.5px;color:#35465c;font-weight:400;letter-spacing:-0.014px;">120,80</div>
<div class="t" style="left:811.19px;width:600px;text-align:right;top:622.50px;font-size:9.5px;line-height:9.5px;color:#35465c;font-weight:400;letter-spacing:-0.014px;">120,80</div>
<div class="t" style="left:884.43px;width:600px;text-align:right;top:622.50px;font-size:9.5px;line-height:9.5px;color:#35465c;font-weight:400;letter-spacing:-0.074px;">100,00</div>
<div class="t" style="left:1495.60px;top:622.24px;font-size:9.8px;line-height:9.8px;color:#35465c;font-weight:400;transform:scaleX(0.8898);transform-origin:0.00px 0;">EUR</div>
<div class="t" style="left:1568.60px;top:622.24px;font-size:9.8px;line-height:9.8px;color:#35465c;font-weight:400;transform:scaleX(0.9012);transform-origin:0.00px 0;">CLOSED</div>
<svg class="r" style="left:1651.5px;top:621.3399999999999px" width="12" height="12" viewBox="0 0 12 12"><path d="M9.3 0.9 Q10.3 0.4 11.1 1.2 Q11.7 2 11.1 2.9 L3.9 10.1 L0.9 11.1 L1.9 8.1 Z M8.1 2.1 L10 4" fill="none" stroke="#4a5a70" stroke-width="1.0" stroke-linejoin="round"/></svg>
<div class="t" style="left:243.60px;top:653.77px;font-size:9.5px;line-height:9.5px;color:#35465c;font-weight:400;letter-spacing:-0.304px;">17.12.2022</div>
<div class="t" style="left:316.80px;top:653.77px;font-size:9.5px;line-height:9.5px;color:#35465c;font-weight:400;letter-spacing:0.372px;">18933</div>
<div class="t" style="left:463.80px;top:653.77px;font-size:9.5px;line-height:9.5px;color:#35465c;font-weight:400;letter-spacing:0.343px;">8b7c86cb-74fc-3cbe-bcb8-18799614e10d</div>
<div class="t" style="left:976.70px;top:653.51px;font-size:9.8px;line-height:9.8px;color:#35465c;font-weight:400;transform:scaleX(0.9133);transform-origin:0.00px 0;">STANDARD</div>
<div class="t" style="left:1050.00px;top:653.77px;font-size:9.5px;line-height:9.5px;color:#35465c;font-weight:400;letter-spacing:0.268px;">Auftrag</div>
<div class="t" style="left:1123.30px;top:653.77px;font-size:9.5px;line-height:9.5px;color:#35465c;font-weight:400;letter-spacing:-0.226px;">208969</div>
<div class="t" style="left:660.79px;width:600px;text-align:right;top:653.77px;font-size:9.5px;line-height:9.5px;color:#35465c;font-weight:400;letter-spacing:-0.014px;">-71,59</div>
<div class="t" style="left:736.79px;width:600px;text-align:right;top:653.77px;font-size:9.5px;line-height:9.5px;color:#35465c;font-weight:400;letter-spacing:-0.014px;">-71,59</div>
<div class="t" style="left:811.19px;width:600px;text-align:right;top:653.77px;font-size:9.5px;line-height:9.5px;color:#35465c;font-weight:400;letter-spacing:-0.014px;">-71,59</div>
<div class="t" style="left:884.43px;width:600px;text-align:right;top:653.77px;font-size:9.5px;line-height:9.5px;color:#35465c;font-weight:400;letter-spacing:-0.074px;">0,00</div>
<div class="t" style="left:1495.60px;top:653.51px;font-size:9.8px;line-height:9.8px;color:#35465c;font-weight:400;transform:scaleX(0.8898);transform-origin:0.00px 0;">EUR</div>
<div class="t" style="left:1568.60px;top:653.51px;font-size:9.8px;line-height:9.8px;color:#35465c;font-weight:400;transform:scaleX(0.9012);transform-origin:0.00px 0;">CLOSED</div>
<svg class="r" style="left:1651.5px;top:652.6099999999999px" width="12" height="12" viewBox="0 0 12 12"><path d="M9.3 0.9 Q10.3 0.4 11.1 1.2 Q11.7 2 11.1 2.9 L3.9 10.1 L0.9 11.1 L1.9 8.1 Z M8.1 2.1 L10 4" fill="none" stroke="#4a5a70" stroke-width="1.0" stroke-linejoin="round"/></svg>
<div class="t" style="left:243.60px;top:685.04px;font-size:9.5px;line-height:9.5px;color:#35465c;font-weight:400;letter-spacing:-0.304px;">06.12.2022</div>
<div class="t" style="left:316.80px;top:685.04px;font-size:9.5px;line-height:9.5px;color:#35465c;font-weight:400;letter-spacing:0.372px;">18912</div>
<div class="t" style="left:463.80px;top:685.04px;font-size:9.5px;line-height:9.5px;color:#35465c;font-weight:400;letter-spacing:0.343px;">642c3dce-71ac-38d1-ae46-bd4ef7e71754</div>
<div class="t" style="left:976.70px;top:684.78px;font-size:9.8px;line-height:9.8px;color:#35465c;font-weight:400;transform:scaleX(0.9133);transform-origin:0.00px 0;">STANDARD</div>
<div class="t" style="left:1050.00px;top:685.04px;font-size:9.5px;line-height:9.5px;color:#35465c;font-weight:400;letter-spacing:0.268px;">Auftrag</div>
<div class="t" style="left:1123.30px;top:685.04px;font-size:9.5px;line-height:9.5px;color:#35465c;font-weight:400;letter-spacing:-0.226px;">208948</div>
<div class="t" style="left:660.79px;width:600px;text-align:right;top:685.04px;font-size:9.5px;line-height:9.5px;color:#35465c;font-weight:400;letter-spacing:-0.014px;">106,20</div>
<div class="t" style="left:736.79px;width:600px;text-align:right;top:685.04px;font-size:9.5px;line-height:9.5px;color:#35465c;font-weight:400;letter-spacing:-0.014px;">106,20</div>
<div class="t" style="left:811.19px;width:600px;text-align:right;top:685.04px;font-size:9.5px;line-height:9.5px;color:#35465c;font-weight:400;letter-spacing:-0.014px;">106,20</div>
<div class="t" style="left:884.43px;width:600px;text-align:right;top:685.04px;font-size:9.5px;line-height:9.5px;color:#35465c;font-weight:400;letter-spacing:-0.074px;">100,00</div>
<div class="t" style="left:1495.60px;top:684.78px;font-size:9.8px;line-height:9.8px;color:#35465c;font-weight:400;transform:scaleX(0.8898);transform-origin:0.00px 0;">EUR</div>
<div class="t" style="left:1568.60px;top:684.78px;font-size:9.8px;line-height:9.8px;color:#35465c;font-weight:400;transform:scaleX(0.9012);transform-origin:0.00px 0;">CLOSED</div>
<svg class="r" style="left:1651.5px;top:683.88px" width="12" height="12" viewBox="0 0 12 12"><path d="M9.3 0.9 Q10.3 0.4 11.1 1.2 Q11.7 2 11.1 2.9 L3.9 10.1 L0.9 11.1 L1.9 8.1 Z M8.1 2.1 L10 4" fill="none" stroke="#4a5a70" stroke-width="1.0" stroke-linejoin="round"/></svg>
<div class="t" style="left:243.60px;top:716.31px;font-size:9.5px;line-height:9.5px;color:#35465c;font-weight:400;letter-spacing:-0.304px;">20.12.2022</div>
<div class="t" style="left:316.80px;top:716.31px;font-size:9.5px;line-height:9.5px;color:#35465c;font-weight:400;letter-spacing:0.372px;">18844</div>
<div class="t" style="left:463.80px;top:716.31px;font-size:9.5px;line-height:9.5px;color:#35465c;font-weight:400;letter-spacing:0.343px;">c26f6c75-8dc9-39ba-9d6d-7e378f760e39</div>
<div class="t" style="left:976.70px;top:716.05px;font-size:9.8px;line-height:9.8px;color:#35465c;font-weight:400;transform:scaleX(0.9133);transform-origin:0.00px 0;">STANDARD</div>
<div class="t" style="left:1050.00px;top:716.31px;font-size:9.5px;line-height:9.5px;color:#35465c;font-weight:400;letter-spacing:0.268px;">Auftrag</div>
<div class="t" style="left:1123.30px;top:716.31px;font-size:9.5px;line-height:9.5px;color:#35465c;font-weight:400;letter-spacing:-0.226px;">208879</div>
<div class="t" style="left:660.79px;width:600px;text-align:right;top:716.31px;font-size:9.5px;line-height:9.5px;color:#35465c;font-weight:400;letter-spacing:-0.014px;">118,53</div>
<div class="t" style="left:736.79px;width:600px;text-align:right;top:716.31px;font-size:9.5px;line-height:9.5px;color:#35465c;font-weight:400;letter-spacing:-0.014px;">118,53</div>
<div class="t" style="left:811.19px;width:600px;text-align:right;top:716.31px;font-size:9.5px;line-height:9.5px;color:#35465c;font-weight:400;letter-spacing:-0.014px;">118,53</div>
<div class="t" style="left:884.43px;width:600px;text-align:right;top:716.31px;font-size:9.5px;line-height:9.5px;color:#35465c;font-weight:400;letter-spacing:-0.074px;">100,00</div>
<div class="t" style="left:1495.60px;top:716.05px;font-size:9.8px;line-height:9.8px;color:#35465c;font-weight:400;transform:scaleX(0.8898);transform-origin:0.00px 0;">EUR</div>
<div class="t" style="left:1568.60px;top:716.05px;font-size:9.8px;line-height:9.8px;color:#35465c;font-weight:400;transform:scaleX(0.9012);transform-origin:0.00px 0;">CLOSED</div>
<svg class="r" style="left:1651.5px;top:715.15px" width="12" height="12" viewBox="0 0 12 12"><path d="M9.3 0.9 Q10.3 0.4 11.1 1.2 Q11.7 2 11.1 2.9 L3.9 10.1 L0.9 11.1 L1.9 8.1 Z M8.1 2.1 L10 4" fill="none" stroke="#4a5a70" stroke-width="1.0" stroke-linejoin="round"/></svg>
<div class="r" style="left:235px;top:450px;width:1490px;height:285.29999999999995px;border:2px solid #e567c8;box-sizing:border-box;"></div>
</body></html>
